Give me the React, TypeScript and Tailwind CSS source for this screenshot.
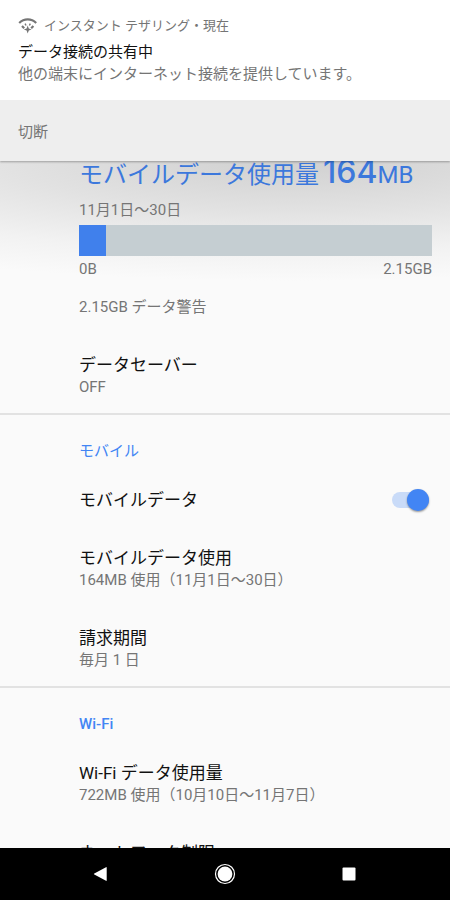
import type { ReactNode } from "react";

function TetheringIcon() {
  return (
    <svg className="w-5 h-4" viewBox="0 0 20 16" fill="none" stroke="#757575" aria-hidden="true">
      <path d="M1.200 5C6 .2 13.400.2 18.200 5" strokeWidth="2.200" />
      <path d="M4 8l2.200 2.200M15.400 8l-2.200 2.200" strokeWidth="2.200" />
      <path d="M7.100 5.600l.9 1.900M12.300 5.600l-.9 1.900" strokeWidth="1.400" />
      <path d="M9.700 7.600l1.100 2.800 2.800 1.100-2.800 1.100-1.100 2.800-1.100-2.800-2.800-1.100 2.800-1.100z" fill="#757575" stroke="none" />
    </svg>
  );
}

function Notification() {
  return (
    <header className="relative z-10 shrink-0 bg-white text-[15px] leading-[22px] text-[#757575] shadow-[0_1px_2px_rgba(0,0,0,0.3)]">
      <div className="px-[18px] py-4">
        <div className="flex items-center gap-1.5 text-[13px] leading-5">
          <TetheringIcon />
          <span>インスタント テザリング・現在</span>
        </div>
        <h1 className="mt-[5px] text-[#111111]">データ接続の共有中</h1>
        <p className="-mb-px">他の端末にインターネット接続を提供しています。</p>
      </div>
      <div className="bg-[#eeeeee] px-[18px] pt-[21px] pb-[18px]">
        <button type="button" className="block">切断</button>
      </div>
    </header>
  );
}

function Row({ title, children }: { title: string; children?: ReactNode }) {
  return (
    <div>
      <h3 className="text-[17px] text-[#111111]">{title}</h3>
      {children && <p>{children}</p>}
    </div>
  );
}

function Section({ title, children }: { title: ReactNode; children: ReactNode }) {
  return (
    <section className="border-b-2 border-[#e2e2e2] pt-[25px] pb-[15px] pl-[79px] pr-[18px]">
      <h2 className="text-[#4285f4]">{title}</h2>
      <div className="mt-[27px] flex flex-col gap-9">{children}</div>
    </section>
  );
}

function UsageSummary() {
  return (
    <section className="-mt-[3px] border-b-2 border-[#e2e2e2] pb-[15px] pl-[79px] pr-[18px]">
      <h2 className="flex h-8 items-baseline whitespace-pre text-[24px] leading-7 text-[#3c78dc]">
        <span>モバイルデータ使用量</span>
        <span className="ml-1 font-['Inter',sans-serif] text-[32px] font-medium">164</span>
        <span>MB</span>
      </h2>
      <p className="mt-[9px]">11月1日〜30日</p>
      <div className="mt-1 h-[31px] bg-[#c5ced2]">
        <div className="h-full w-[27px] bg-[#4080ec]" />
      </div>
      <div className="mt-[2px] flex justify-between">
        <span>0B</span>
        <span>2.15GB</span>
      </div>
      <p className="mt-4 mb-9">2.15GB データ警告</p>
      <Row title="データセーバー">OFF</Row>
    </section>
  );
}

function NavBar() {
  return (
    <nav className="flex h-[52px] shrink-0 items-center justify-center gap-[100px] bg-black text-white">
      <button type="button" aria-label="戻る">
        <svg className="size-6" viewBox="0 0 24 24" fill="currentColor">
          <path d="M5.3 11.4L17 5.2q.7-.3.7.5v12.6q0 .8-.7.5L5.3 12.600q-1-.6 0-1.200z" />
        </svg>
      </button>
      <button type="button" aria-label="ホーム">
        <svg className="size-6" viewBox="0 0 24 24">
          <circle cx="12" cy="12" r="9.500" fill="none" stroke="currentColor" strokeWidth="1.200" />
          <circle cx="12" cy="12" r="7.400" fill="currentColor" />
        </svg>
      </button>
      <button type="button" aria-label="最近">
        <svg className="size-6" viewBox="0 0 24 24" fill="currentColor">
          <rect x="5.500" y="5.500" width="13" height="13" rx="1" />
        </svg>
      </button>
    </nav>
  );
}

export default function App() {
  return (
    <div className="flex h-screen flex-col bg-[#fafafa] font-['Roboto','Noto_Sans_CJK_JP',sans-serif]" lang="ja">
      <Notification />
      <main className="relative min-h-0 flex-1 overflow-hidden bg-[radial-gradient(ellipse_150%_120px_at_65%_0,#d0d0d0,#e2e2e2_42%,#f2f2f2_75%,#fafafa)] text-[15px] leading-[22px] text-[#757575]">
        <UsageSummary />
        <Section title="モバイル">
          <label className="flex items-center justify-between">
            <span className="text-[17px] text-[#111111]">モバイルデータ</span>
            <input
              type="checkbox"
              role="switch"
              defaultChecked
              className="relative mr-[3px] h-4 w-[37px] appearance-none rounded-full bg-[#c9dbf8] before:absolute before:-top-[3px] before:right-0 before:size-[22px] before:rounded-full before:bg-[#4285f4] before:shadow-[0_1px_2px_rgba(0,0,0,0.4)]"
            />
          </label>
          <Row title="モバイルデータ使用">164MB 使用（11月1日〜30日）</Row>
          <Row title="請求期間">毎月 1 日</Row>
        </Section>
        <Section title={<span className="font-medium">Wi-Fi</span>}>
          <Row title="Wi-Fi データ使用量">722MB 使用（10月10日〜11月7日）</Row>
          <Row title="ネットワーク制限" />
        </Section>
      </main>
      <NavBar />
    </div>
  );
}
